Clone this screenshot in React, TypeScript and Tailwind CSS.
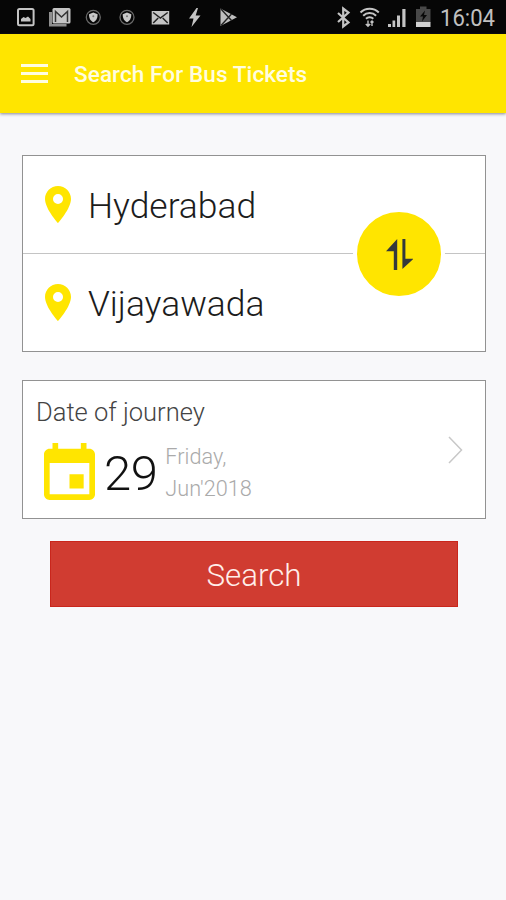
import React from 'react';

function Shield({ x }: { x: number }) {
  return (
    <g transform={`translate(${x} 17.3)`}>
      <circle r="7" stroke="#6a6a6a" strokeWidth="1.3" />
      <path d="M-4.300-3L0-4.800 4.300-3C4.300 1.500 2.700 3.500 0 5-2.700 3.500-4.300 1.500-4.300-3z" fill="#c8c8c8" />
      <circle cy="-1" r="1" fill="#777" />
    </g>
  );
}

function StatusBar() {
  return (
    <div className="flex h-[34px] shrink-0 items-center bg-[#060606] text-[#c4c4c4]">
      <svg className="h-[34px] w-[506px]" viewBox="0 0 506 34" fill="none">
        {/* gallery */}
        <rect x="18" y="9" width="15.6" height="16.2" rx="1.5" stroke="currentColor" strokeWidth="2" />
        <path d="M21 21.500v-2.500l2.500-2 2 1 2.500-1.500 2.500 2.500v2.500z" fill="currentColor" />
        {/* mail stack */}
        <path d="M49 12v14.500h17.500V24H52V12z" fill="#8f8f8f" />
        <rect x="52.500" y="8" width="18" height="15.500" rx="1.500" fill="#c4c4c4" />
        <path d="M55.500 22V11.500l6 5.500 6-5.500V22" stroke="#333" strokeWidth="1.500" />
        <Shield x={93.3} />
        <Shield x={127} />
        {/* envelope */}
        <rect x="151.700" y="11" width="17.500" height="13.500" fill="#c4c4c4" />
        <path d="M153.200 12.500l7.200 5.500 7.300-5.500M153.200 23l5-5M167.700 23l-5-5" stroke="#222" strokeWidth="1.500" />
        {/* bolt */}
        <path d="M196.500 8l-7.500 10.500h4.500l-2 8.500 9-11.500h-4.800l2.300-7.500z" fill="currentColor" />
        {/* play */}
        <path d="M220.500 8.500v17.500L237 17.300z" fill="#bdbdbd" />
        <path d="M221 9l10.500 11.500M221 25.500l10.500-11.500" stroke="#222" strokeWidth="1.400" />
        {/* bluetooth */}
        <path d="M338 13l10.500 9.500-5.300 4V8.500l5.300 4L338 22" stroke="currentColor" strokeWidth="2.200" />
        {/* wifi */}
        <g stroke="currentColor" strokeWidth="2">
          <path d="M360.500 12.500c5-5 13.300-5 18.300 0M363.200 15.700c3.500-3.500 9.400-3.500 12.900 0M366 18.800c2-2 5.300-2 7.300 0" />
          <path d="M368 20.500v6M365.800 24l2.200 2.200 2.200-2.200M372 26v-5M370.500 22.500l1.500-1.500 1.500 1.500" strokeWidth="1.400" />
        </g>
        {/* signal */}
        <path d="M388 24h3v3h-3zM392.500 20.500h2.700V27h-2.700zM397 15.500h3V27h-3zM402.300 9h3.200v18h-3.200z" fill="currentColor" />
        {/* battery */}
        <path d="M420 6.500h6.500V9h4v13.500h-14.500V9h4z" fill="#484848" />
        <path d="M425 10.500l-5 6h3l-1 5 5-6.500h-3z" fill="#080808" />
        <path d="M416 22h14.500v5H416z" fill="#d2d2d2" />
        <text x="440" y="26" fill="#c0c0c0" fontSize="24" fontWeight="400" fontFamily="Roboto, sans-serif" textLength="55" lengthAdjust="spacingAndGlyphs">16:04</text>
      </svg>
    </div>
  );
}

function Pin() {
  return (
    <svg className="h-[37px] w-[26px] shrink-0" viewBox="5 2 14 20" preserveAspectRatio="none">
      <path fill="#ffe500" d="M12 2C8.130 2 5 5.130 5 9c0 5.250 7 13 7 13s7-7.750 7-13c0-3.870-3.130-7-7-7zm0 9.700a2.700 2.700 0 0 1 0-5.400 2.700 2.700 0 0 1 0 5.400z" />
    </svg>
  );
}

function Place({ name }: { name: string }) {
  return (
    <div className="flex flex-1 items-center pl-[22px]">
      <Pin />
      <span className="ml-[17px] pt-[5px] text-[35.4px] leading-none text-[#1c1c1c]">{name}</span>
    </div>
  );
}

export default function App() {
  return (
    <div className="flex h-[900px] w-[506px] flex-col bg-[#f8f8fa] font-[Roboto,sans-serif] font-light">
      <StatusBar />
      <header className="flex h-[79px] shrink-0 items-center bg-[#ffe500] pl-[21px] shadow-[0_1px_3px_rgba(60,60,80,0.6)]">
        <div className="flex w-[27px] flex-col gap-[5px]">
          <div className="h-[3px] bg-[#fffde0]" />
          <div className="h-[3px] bg-[#fffde0]" />
          <div className="h-[3px] bg-[#fffde0]" />
        </div>
        <h1 className="ml-[26px] pt-px text-[22.5px] font-medium leading-none tracking-[0.1px] text-[#fffde0]">
          Search For Bus Tickets
        </h1>
      </header>

      <main className="flex flex-col px-[22px] pt-[42px]">
        <section className="relative flex h-[197px] w-[464px] flex-col border border-[#929292] bg-white">
          <Place name="Hyderabad" />
          <div className="h-px bg-[#c4c4c4]" />
          <Place name="Vijayawada" />
          <button className="absolute left-[329.500px] top-[51.500px] flex size-[92px] items-center justify-center rounded-full border-4 border-white bg-[#ffe500]">
            <svg className="h-[32px] w-[28px]" viewBox="385 238 28 32" fill="#34393c">
              <path d="M397.200 239v31h-3.400v-18.800H386zM402.400 239h3v19.800h8L402.400 269z" />
            </svg>
          </button>
        </section>

        <section className="mt-7 flex h-[139px] w-[464px] items-center justify-between border border-[#929292] bg-white pl-[13px] pr-[22px]">
          <div className="flex flex-col pt-[3px]">
            <h2 className="text-[25.5px] leading-7 text-[#444]">Date of journey</h2>
            <div className="mt-[13px] flex items-center pl-2">
              <svg className="h-[57px] w-[51px]" viewBox="3 1 18 20" preserveAspectRatio="none">
                <path fill="#ffe500" d="M17 12h-5v5h5v-5zM16 1v2H8V1H6v2H5c-1.110 0-2 .9-2 2v14c0 1.100.89 2 2 2h14c1.100 0 2-.9 2-2V5c0-1.100-.9-2-2-2h-1V1h-2zm3 18H5V8h14v11z" />
              </svg>
              <span className="ml-[9px] pt-[4px] text-[49px] leading-none tracking-[-0.5px] text-[#111]">29</span>
              <p className="ml-2 pt-[2px] text-[21.700px] leading-8 text-[#aaa]">
                Friday,
                <br />
                Jun'2018
              </p>
            </div>
          </div>
          <svg className="h-7 w-[15px]" viewBox="0 0 15 28" fill="none">
            <path d="M1 1l12.500 13L1 27" stroke="#c8c8c8" strokeWidth="1.500" />
          </svg>
        </section>

        <button className="ml-7 mt-[22px] flex h-[66px] w-[408px] items-center justify-center border border-[#c9261c] bg-[#d03c31] pt-[3px] text-[31.300px] leading-none text-[#ffeeea]">
          Search
        </button>
      </main>
    </div>
  );
}
